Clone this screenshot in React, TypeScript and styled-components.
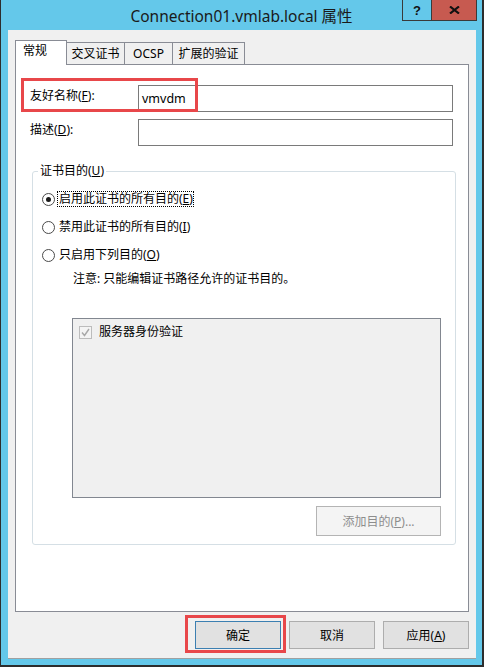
import React from 'react';
import styled, { createGlobalStyle } from 'styled-components';

const GlobalStyle = createGlobalStyle`
  html, body { margin: 0; padding: 0; }
  body {
    width: 484px;
    height: 667px;
    overflow: hidden;
    font-family: "Noto Sans", "Noto Sans CJK SC", sans-serif;
    font-size: 12px;
    color: #000;
  }
  *, *::before, *::after { box-sizing: border-box; }
`;

const Window = styled.div`
  width: 484px;
  height: 667px;
  background: #64c8ea;
  border-left: 1px solid #2d2d2d;
  border-right: 2px solid #2d2d2d;
  border-bottom: 2px solid #2d2d2d;
  display: flex;
  flex-direction: column;
`;

const TitleBar = styled.div`
  height: 30px;
  flex: none;
  display: grid;
  grid-template-columns: 1fr auto 1fr;
`;

const Title = styled.div`
  align-self: center;
  font-family: "Noto Sans", "Noto Sans CJK SC", sans-serif;
  font-size: 15.5px;
  line-height: 20px;
  color: #1a1a1a;
  white-space: nowrap;
  margin-top: 1px;
`;

const CaptionButtons = styled.div`
  justify-self: end;
  align-self: start;
  margin-right: 5px;
  display: flex;
  height: 21px;
  border: 1px solid #3a3a3a;
  border-top: none;
`;

const HelpButton = styled.div`
  width: 29px;
  border-right: 1px solid #3a3a3a;
  display: flex;
  align-items: center;
  justify-content: center;
  font-family: "Liberation Sans", sans-serif;
  font-weight: bold;
  font-size: 13px;
  color: #111;
  background: #64c8ea;
`;

const CloseButton = styled.div`
  width: 44px;
  display: flex;
  align-items: center;
  justify-content: center;
  background: #c75a50;
`;

const Client = styled.div`
  flex: 1;
  margin: 0 6px 6px 7px;
  background: #f0f0f0;
  border-bottom: 1px solid #a0a0a0;
  padding: 10px 7px 0 7px;
  display: flex;
  flex-direction: column;
`;

const TabStrip = styled.div`
  height: 24px;
  display: flex;
  align-items: flex-end;
  position: relative;
  z-index: 1;
`;

const Tab = styled.div<{ $selected?: boolean; $w: number }>`
  width: ${p => p.$w}px;
  height: ${p => (p.$selected ? 25 : 22)}px;
  margin-bottom: ${p => (p.$selected ? -1 : 0)}px;
  margin-left: ${p => (p.$selected ? 0 : -1)}px;
  border: 1px solid #898c95;
  border-bottom: none;
  background: ${p => (p.$selected ? '#ffffff' : '#f0f0f0')};
  display: flex;
  align-items: center;
  justify-content: center;
  padding: ${p => (p.$selected ? '0 12px 4px 0' : '0')};
  line-height: 16px;
  white-space: nowrap;
  position: relative;
  z-index: ${p => (p.$selected ? 2 : 1)};
  &:first-child { margin-left: 0; }
`;

const Panel = styled.div`
  flex: 1;
  background: #ffffff;
  border: 1px solid #898c95;
  display: flex;
  flex-direction: column;
`;

const FormGrid = styled.div`
  position: relative;
  margin-top: 20px;
  padding: 0 15px 0 14px;
  display: grid;
  grid-template-columns: 108px 1fr;
  row-gap: 7px;
`;

const FieldLabel = styled.div`
  padding-top: 3px;
  line-height: 16px;
  white-space: nowrap;
`;

const TextBox = styled.div`
  height: 27px;
  border: 1px solid #7a7a7a;
  background: #fff;
  padding: 0 3px;
  display: flex;
  align-items: center;
  line-height: 16px;
  font-size: 12.5px;
`;

const Highlight = styled.div<{ $l: number; $t: number; $w: number; $h: number }>`
  position: absolute;
  left: ${p => p.$l}px;
  top: ${p => p.$t}px;
  width: ${p => p.$w}px;
  height: ${p => p.$h}px;
  border: 3px solid #e8474a;
  pointer-events: none;
  z-index: 3;
`;

const U = styled.span`
  text-decoration: underline;
`;

const Group = styled.fieldset`
  margin: 17px 12px 0 16px;
  padding: 0 14px 8px 9px;
  border: 1px solid #d5dfe5;
  border-radius: 3px;
  min-width: 0;
`;

const Legend = styled.legend`
  margin-left: -4px;
  padding: 0 2px;
  line-height: 16px;
`;

const RadioList = styled.div`
  margin-top: 10px;
  display: flex;
  flex-direction: column;
  gap: 8px;
`;

const RadioRow = styled.div`
  height: 20px;
  display: flex;
  align-items: center;
  gap: 2px;
`;

const Radio = styled.span<{ $checked?: boolean }>`
  width: 13px;
  height: 13px;
  border-radius: 50%;
  border: 1px solid #4a4a4a;
  background: #fff;
  display: flex;
  align-items: center;
  justify-content: center;
  flex: none;
  &::after {
    content: '';
    display: ${p => (p.$checked ? 'block' : 'none')};
    width: 5px;
    height: 5px;
    border-radius: 50%;
    background: #1a1a1a;
  }
`;

const RadioText = styled.span<{ $focused?: boolean }>`
  line-height: 14px;
  padding: 0 0 0 1px;
  border: 1px dotted ${p => (p.$focused ? '#000' : 'transparent')};
  white-space: nowrap;
`;

const Note = styled.div`
  margin: 6px 0 0 31px;
  line-height: 16px;
  white-space: nowrap;
`;

const ListBox = styled.div`
  margin: 31px 0 0 30px;
  height: 180px;
  border: 1px solid #828790;
  background: #f0f0f0;
  padding: 5px 6px;
`;

const ListItem = styled.div`
  display: flex;
  align-items: center;
  gap: 7px;
  line-height: 16px;
`;

const CheckBox = styled.span`
  width: 13px;
  height: 13px;
  border: 1px solid #bcbcbc;
  background: #f4f4f4;
  display: flex;
  align-items: center;
  justify-content: center;
  flex: none;
`;

const AddButton = styled.div`
  margin: 8px 0 0 auto;
  width: 125px;
  height: 30px;
  border: 1px solid #b4b4b4;
  background: #f4f4f4;
  color: #8d8d8d;
  display: flex;
  align-items: center;
  justify-content: center;
  white-space: nowrap;
`;

const ButtonRow = styled.div`
  display: flex;
  justify-content: flex-end;
  gap: 8px;
  padding: 9px 0 9px;
`;

const ButtonSlot = styled.div`
  position: relative;
`;

const DialogButton = styled.div<{ $default?: boolean }>`
  width: 86px;
  height: 28px;
  border: 1px solid ${p => (p.$default ? '#3c7fb1' : '#adadad')};
  background: #e1e1e1;
  display: flex;
  align-items: center;
  justify-content: center;
  white-space: nowrap;
`;

export default function App() {
  return (
    <>
      <GlobalStyle />
      <Window>
        <TitleBar>
          <span />
          <Title>Connection01.vmlab.local 属性</Title>
          <CaptionButtons>
            <HelpButton>?</HelpButton>
            <CloseButton>
              <svg width="11" height="8" viewBox="0 0 11 8">
                <path d="M1 0.5 L10 7.5 M10 0.5 L1 7.5" stroke="#111" strokeWidth="2.2" fill="none" />
              </svg>
            </CloseButton>
          </CaptionButtons>
        </TitleBar>
        <Client>
          <TabStrip>
            <Tab $selected $w={52}>常规</Tab>
            <Tab $w={59}>交叉证书</Tab>
            <Tab $w={49}>OCSP</Tab>
            <Tab $w={73}>扩展的验证</Tab>
          </TabStrip>
          <Panel>
            <FormGrid>
              <Highlight $l={5} $t={-7} $w={177} $h={34} />
              <FieldLabel>友好名称(<U>F</U>):</FieldLabel>
              <TextBox>vmvdm</TextBox>
              <FieldLabel>描述(<U>D</U>):</FieldLabel>
              <TextBox />
            </FormGrid>
            <Group>
              <Legend>证书目的(<U>U</U>)</Legend>
              <RadioList>
                <RadioRow>
                  <Radio $checked />
                  <RadioText $focused>启用此证书的所有目的(<U>E</U>)</RadioText>
                </RadioRow>
                <RadioRow>
                  <Radio />
                  <RadioText>禁用此证书的所有目的(<U>I</U>)</RadioText>
                </RadioRow>
                <RadioRow>
                  <Radio />
                  <RadioText>只启用下列目的(<U>O</U>)</RadioText>
                </RadioRow>
              </RadioList>
              <Note>注意: 只能编辑证书路径允许的证书目的。</Note>
              <ListBox>
                <ListItem>
                  <CheckBox>
                    <svg width="9" height="9" viewBox="0 0 9 9">
                      <path d="M1 4.5 L3.5 7.5 L8 1" stroke="#a8a8a8" strokeWidth="1.4" fill="none" />
                    </svg>
                  </CheckBox>
                  <span>服务器身份验证</span>
                </ListItem>
              </ListBox>
              <AddButton>添加目的(<U>P</U>)...</AddButton>
            </Group>
          </Panel>
          <ButtonRow>
            <ButtonSlot>
              <Highlight $l={-10} $t={-6} $w={101} $h={38} />
              <DialogButton $default>确定</DialogButton>
            </ButtonSlot>
            <DialogButton>取消</DialogButton>
            <DialogButton>应用(<U>A</U>)</DialogButton>
          </ButtonRow>
        </Client>
      </Window>
    </>
  );
}
